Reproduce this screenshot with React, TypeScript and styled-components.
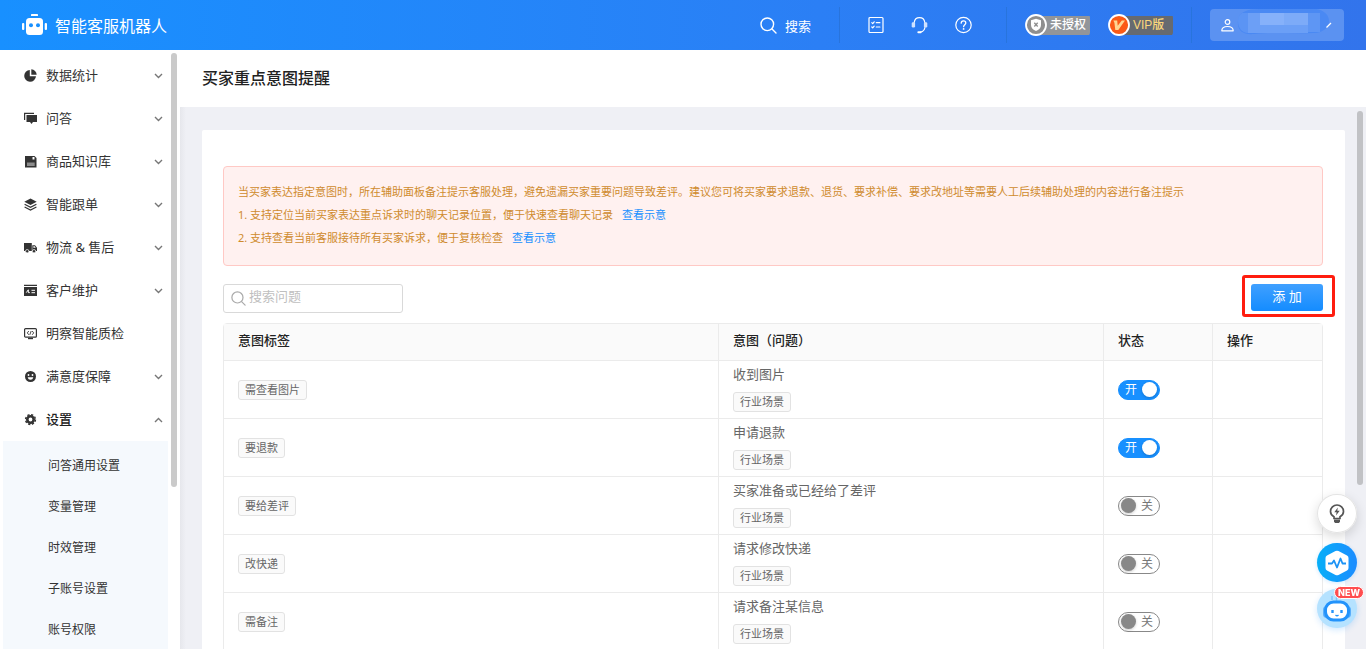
import React, { useState } from 'react';
import styled, { createGlobalStyle } from 'styled-components';

const GlobalStyle = createGlobalStyle`
  * { box-sizing: border-box; }
  html, body { margin: 0; height: 100%; overflow: hidden; }
  body, button, input {
    font-family: "Noto Sans", "Noto Sans CJK SC", sans-serif;
    font-size: 13px;
    color: #333;
  }
  button { border: 0; padding: 0; background: none; cursor: pointer; }
  a { text-decoration: none; color: #1890ff; }
  svg { display: block; flex: none; }
`;

const Page = styled.div`
  display: flex;
  flex-direction: column;
  height: 100vh;
  background: #eff0f5;
`;

/* ---------- header ---------- */
const Header = styled.header`
  display: flex;
  align-items: center;
  flex: none;
  height: 50px;
  padding: 0 22px;
  background: linear-gradient(90deg, #1890ff 0%, #2b7ff5 60%, #3274ec 100%);
  color: #fff;
`;
const Brand = styled.a`
  display: flex;
  align-items: center;
  gap: 8px;
  margin-right: auto;
  color: #fff;
  font-size: 16px;
`;
const SearchButton = styled.button`
  display: flex;
  align-items: center;
  gap: 8px;
  margin-right: 28px;
  color: #fff;
`;
const Divider = styled.span`
  width: 1px;
  height: 36px;
  background: #2874dd;
`;
const HeaderIcons = styled.div`
  display: flex;
  gap: 27px;
  padding: 0 34px 0 28px;
`;
const IconButton = styled.button`
  color: #fff;
`;
const Badges = styled.div`
  display: flex;
  gap: 18px;
  padding: 0 18px;
`;
const Badge = styled.div<{ $bg: string; $color: string }>`
  display: flex;
  align-items: center;
  width: 65px;
  height: 22px;
  gap: 3px;
  color: ${(p) => p.$color};
  font-family: "Liberation Sans", "Noto Sans CJK SC", sans-serif;
  font-size: 12px;
  font-weight: 500;
  line-height: 18px;
  white-space: nowrap;
  background: linear-gradient(${(p) => p.$bg}, ${(p) => p.$bg}) right center / 54px 19px no-repeat;
  border-radius: 4px;
`;
const UserButton = styled.button`
  display: flex;
  align-items: center;
  width: 134px;
  height: 32px;
  margin-left: 18px;
  padding-left: 11px;
  border-radius: 4px;
  background: #5b92f1;
  color: #fff;
`;

/* ---------- sidebar ---------- */
const Body = styled.div`
  display: flex;
  flex: 1;
  min-height: 0;
`;
const Sidebar = styled.aside`
  position: relative;
  z-index: 1;
  flex: none;
  width: 180px;
  padding: 4px 12px 0 3px;
  overflow: hidden;
  background: #fff;
`;
const SideEdge = styled.div`
  flex: none;
  width: 6px;
  margin-right: -6px;
  background: linear-gradient(90deg, #e6e7ec, #eff0f5);
`;
const MenuItem = styled.button<{ $active?: boolean }>`
  display: flex;
  align-items: center;
  gap: 9px;
  width: 100%;
  height: 43px;
  padding: 0 5px 0 21px;
  color: ${(p) => (p.$active ? '#222' : '#333')};
  font-weight: ${(p) => (p.$active ? 500 : 400)};
  text-align: left;
`;
const MenuLabel = styled.span`
  flex: 1;
  padding-bottom: 2px;
  line-height: 20px;
`;
const SubMenu = styled.nav`
  display: flex;
  flex-direction: column;
  padding: 5px 0;
  background: #f5f9fd;
`;
const SubItem = styled.a`
  height: 41px;
  padding-left: 45px;
  color: #333;
  font-size: 12px;
  line-height: 40px;
`;
const Thumb = styled.span<{ $top: number; $right: number; $height: string; $color: string }>`
  position: absolute;
  top: ${(p) => p.$top}px;
  right: ${(p) => p.$right}px;
  width: 6px;
  height: ${(p) => p.$height};
  border-radius: 3px;
  background: ${(p) => p.$color};
`;

/* ---------- main ---------- */
const Main = styled.main`
  display: flex;
  flex: 1;
  flex-direction: column;
  min-width: 0;
`;
const TitleBar = styled.div`
  flex: none;
  height: 57px;
  padding: 0 22px;
  background: #fff;
`;
const Title = styled.h1`
  margin: 0;
  font-size: 16px;
  font-weight: 500;
  line-height: 56px;
  color: #222;
`;
const Scroller = styled.div`
  position: relative;
  flex: 1;
  min-height: 0;
  padding: 23px 21px 0 22px;
  overflow: hidden;
`;
const Card = styled.section`
  padding: 36px 22px 24px 21px;
  border-radius: 2px 2px 0 0;
  background: #fff;
`;
const Notice = styled.div`
  padding: 13px 14px 16px;
  border: 1px solid #ffc9c5;
  border-radius: 4px;
  background: #fff1f0;
  color: #cf8b2d;
  font-size: 11px;
  line-height: 23px;
`;
const NoticeLine = styled.p`
  margin: 0;
  a { margin-left: 9px; }
`;
const Toolbar = styled.div`
  display: flex;
  align-items: center;
  justify-content: space-between;
  height: 57px;
  padding: 9px 0 1px;
`;
const SearchBox = styled.label`
  display: flex;
  align-items: center;
  gap: 3px;
  width: 180px;
  height: 29px;
  padding: 0 7px;
  border: 1px solid #d9d9d9;
  border-radius: 3px;
  color: #aaa;
`;
const SearchInput = styled.input`
  flex: 1;
  min-width: 0;
  height: 26px;
  padding: 0 0 5px;
  border: 0;
  outline: 0;
  background: none;
  &::placeholder { color: #bfbfbf; opacity: 1; }
`;
const Highlight = styled.div`
  align-self: flex-start;
  margin-right: -12px;
  padding: 6px 9px 3px 6px;
  border: 3px solid #ff1d0f;
  border-radius: 3px;
`;
const AddButton = styled.button`
  display: block;
  width: 72px;
  height: 27px;
  padding-bottom: 4px;
  border-radius: 3px;
  background: linear-gradient(#40a0ff, #148cff);
  color: #fff;
  line-height: 22px;
  white-space: pre;
`;
const Table = styled.table`
  width: 100%;
  table-layout: fixed;
  border-collapse: separate;
  border-spacing: 0;
  border: 1px solid #ebebeb;
  border-radius: 4px 4px 0 0;
  color: #666;
  th, td {
    padding: 0 14px;
    border-bottom: 1px solid #ebebeb;
    text-align: left;
  }
  th + th, td + td { border-left: 1px solid #ebebeb; }
  th {
    height: 37px;
    padding-bottom: 5px;
    background: #fafafa;
    color: #222;
    font-weight: 500;
  }
  td { height: 58px; }
`;
const Col = styled.col<{ $w: string }>`
  width: ${(p) => p.$w};
`;
const Stack = styled.div`
  display: flex;
  flex-direction: column;
  align-items: flex-start;
  gap: 8px;
  line-height: 19px;
  padding-bottom: 2px;
`;
const Tag = styled.span`
  display: block;
  width: fit-content;
  height: 20px;
  padding: 0 6px;
  border: 1px solid #e2e2e2;
  border-radius: 3px;
  background: #fafafa;
  font-size: 11px;
  line-height: 18px;
`;
const SwitchTrack = styled.label<{ $on: boolean }>`
  display: flex;
  flex-direction: ${(p) => (p.$on ? 'row' : 'row-reverse')};
  align-items: center;
  justify-content: space-between;
  width: 42px;
  height: 20px;
  padding: ${(p) => (p.$on ? '0 2px 0 6px' : '0 6px 0 2px')};
  border: 1px solid ${(p) => (p.$on ? '#1890ff' : '#888')};
  border-radius: 10px;
  background: ${(p) => (p.$on ? '#1890ff' : '#fff')};
  color: ${(p) => (p.$on ? '#fff' : '#777')};
  font-size: 12px;
  line-height: 16px;
`;
const SwitchKnob = styled.input`
  appearance: none;
  width: 15px;
  height: 15px;
  margin: 0;
  border-radius: 50%;
  background: #888;
  box-shadow: 0 1px 3px rgba(0, 0, 0, 0.2);
  &:checked { background: #fff; }
`;

/* ---------- floating helpers ---------- */
const Floats = styled.div`
  position: fixed;
  right: 9px;
  bottom: 21px;
  z-index: 2;
  display: flex;
  flex-direction: column;
  gap: 7px;
`;
const FloatButton = styled.button<{ $bg: string; $shadow: string }>`
  position: relative;
  display: flex;
  align-items: center;
  justify-content: center;
  width: 40px;
  height: 39px;
  border-radius: 20px;
  background: ${(p) => p.$bg};
  box-shadow: ${(p) => p.$shadow};
  color: #555;
  &:first-child { margin-bottom: 3px; }
`;
const NewMark = styled.span`
  position: absolute;
  top: -3px;
  right: -7px;
  padding: 0 3px;
  border: 1px solid #fff;
  border-radius: 7px;
  background: #ff4d4f;
  color: #fff;
  font: 800 9px/11px Inter, sans-serif;
`;

/* ---------- icons ---------- */
const Svg = ({ w = 13, h = w, vb, children }: { w?: number; h?: number; vb?: string; children: React.ReactNode }) => (
  <svg width={w} height={h} viewBox={vb ?? `0 0 ${w} ${h}`} fill="none" stroke="none" aria-hidden="true">{children}</svg>
);

const RobotLogo = () => (
  <Svg w={25} h={22}>
    <g fill="#fff">
      <rect x="9" y="0" width="7" height="2" rx="0.6" />
      <rect x="4" y="4" width="17" height="17" rx="3.5" />
      <rect x="0" y="9" width="2.3" height="7" rx="1" />
      <rect x="22.7" y="9" width="2.3" height="7" rx="1" />
    </g>
    <circle cx="9" cy="11.3" r="2" fill="#1890ff" />
    <circle cx="16" cy="11.3" r="2" fill="#1890ff" />
  </Svg>
);
const Magnifier = ({ size = 17 }: { size?: number }) => (
  <Svg w={size} vb="0 0 17 17">
    <g stroke="currentColor" strokeWidth="1.4" strokeLinecap="round">
      <circle cx="7.3" cy="7.3" r="6.3" />
      <path d="M12 12l4 4" />
    </g>
  </Svg>
);
const ChecklistIcon = () => (
  <Svg w={16} h={18}>
    <g stroke="currentColor" strokeWidth="1.2" strokeLinecap="round" strokeLinejoin="round">
      <rect x="1" y="1.5" width="14" height="15" rx="1" />
      <path d="M3.8 6.7l.9.9 1.5-1.8M8.3 6.7h3.6M3.8 11l.9.9 1.5-1.8M8.3 11h3.6" />
    </g>
  </Svg>
);
const HeadsetIcon = () => (
  <Svg w={17} h={18}>
    <g stroke="currentColor" strokeWidth="1.2" strokeLinecap="round">
      <path d="M3.2 6.5C3.6 3.6 5.700 1.700 8.500 1.700s4.900 1.900 5.300 4.800" />
      <path d="M13.900 11.500c-.4 2.600-1.700 4-4.200 4.500" />
      <path d="M7.300 16.200h2.400" strokeWidth="1.900" />
    </g>
    <rect x="0.700" y="6.200" width="3.400" height="5.400" rx="1.300" fill="#cfe2ff" />
    <rect x="12.900" y="6.200" width="3.400" height="5.400" rx="1.300" fill="#cfe2ff" />
  </Svg>
);
const HelpIcon = () => (
  <Svg w={17} h={18}>
    <circle cx="8.500" cy="9" r="7.700" stroke="currentColor" strokeWidth="1.200" />
    <path d="M6.200 7.200c0-1.400 1-2.300 2.300-2.300s2.300.9 2.300 2.100c0 1.600-2.200 1.800-2.200 3.700" stroke="currentColor" strokeWidth="1.300" strokeLinecap="round" />
    <circle cx="8.600" cy="12.900" r="0.900" fill="currentColor" />
  </Svg>
);
const ShieldBadge = () => (
  <Svg w={22}>
    <circle cx="11" cy="11" r="10" fill="#8f8f8f" stroke="#fff" strokeWidth="1.800" />
    <path d="M11 4.800l5 1.500v4.700c0 3-2.200 5-5 6-2.800-1-5-3-5-6V6.300z" fill="#fff" />
    <path d="M9.300 8.800l3.400 3.700M12.700 8.800l-3.400 3.700" stroke="#8f8f8f" strokeWidth="1.300" />
  </Svg>
);
const VipBadge = () => (
  <Svg w={22}>
    <circle cx="11" cy="11" r="10" fill="#fb5a16" stroke="#fff" strokeWidth="1.800" />
    <path d="M5.300 6.500h3.900l.5 5.200 4.100-5.200H17L10.300 16H7.300l-.9-7.200z" fill="#ffd591" />
  </Svg>
);
const UserIcon = () => (
  <Svg w={13} h={13}>
    <g stroke="currentColor" strokeWidth="1.200" strokeLinejoin="round">
      <circle cx="6.500" cy="3" r="2.300" />
      <path d="M0.800 11.800c0-2.700 2-4.300 5.700-4.300s5.700 1.600 5.700 4.300z" />
    </g>
  </Svg>
);
const MaskedName = () => (
  <Svg w={104} h={32}>
    <path d="M4 12C5 3 12 0 26 0h56c8 1 13 6 13 12s-6 12-15 12c-20 1-42-1-60 1C9 26 3 22 4 12z" fill="#4a89f3" />
    <path d="M4 12C4 9 5 6 8 4h6v20C8 24 4 19 4 12z" fill="#5b94f4" />
    <rect x="14" y="4" width="12" height="20" fill="#6c9ff6" />
    <rect x="26" y="4" width="24" height="12" fill="#86b1fa" />
    <rect x="50" y="4" width="24" height="12" fill="#7dabf8" />
    <rect x="74" y="4" width="12" height="19" fill="#5e96f4" />
    <rect x="26" y="16" width="48" height="8" fill="#6b9ff6" />
    <path d="M92.500 18.500l4.500-4.500" stroke="#fff" strokeWidth="1.200" />
  </Svg>
);
const Chevron = ({ up }: { up?: boolean }) => (
  <Svg w={9} h={6}>
    <path d={up ? 'M1 5l3.500-3.500L8 5' : 'M1 1l3.500 3.500L8 1'} stroke="#777" strokeWidth="1.400" />
  </Svg>
);

const menuIcons: Record<string, React.ReactNode> = {
  pie: <><path d="M5.800 1A5.900 5.900 0 1 0 12 7.300H5.800z" fill="#333" /><path d="M7.300 0.300A5.700 5.700 0 0 1 12.700 5.800H7.300z" fill="#333" /></>,
  chat: <><path d="M0.600 8V1.300H10" stroke="#333" strokeWidth="1.200" /><path d="M2.500 3H13v7H9l-1.500 2L6 10H2.500z" fill="#333" /></>,
  goods: <><path d="M1 1h9.500l2 2v9.500H1z" fill="#333" /><path d="M3 7.500h7.700V11H3z" fill="#8c8c8c" /><path d="M8.500 2h2v2.500h-2z" fill="#fff" /></>,
  layers: <><path d="M6.500 0.500L12.700 3.700 6.500 7 .3 3.700z" fill="#333" /><path d="M.6 6.300l5.900 3 5.900-3M.6 9l5.900 3 5.900-3" stroke="#333" strokeWidth="1.200" /></>,
  truck: <><path d="M0 2h7.800v8H0zM8.300 4.300h2.700L13 6.700V10H8.300z" fill="#333" /><circle cx="3.200" cy="10.200" r="1.700" fill="#333" stroke="#fff" strokeWidth=".7" /><circle cx="10" cy="10.200" r="1.700" fill="#333" stroke="#fff" strokeWidth=".7" /><path d="M9.400 5.300h1.300l1 1.400H9.400z" fill="#fff" /></>,
  card: <><path d="M0 .8h13v1.300H0zM0 2.900h13v9H0z" fill="#333" /><path d="M2.300 8.600l2-2.800v2.800h1.500M7.500 6.300H11M7.500 8.700H11" stroke="#fff" strokeWidth="1" /></>,
  monitor: <><rect x=".6" y="1.600" width="11.800" height="8.600" rx="1" stroke="#333" strokeWidth="1.200" /><path d="M4 11.500h5" stroke="#333" strokeWidth="1.400" /><path d="M4.800 4L3.300 5.900l1.500 1.900M8.200 4l1.500 1.900-1.500 1.900M7.200 4L5.800 7.800" stroke="#333" strokeWidth=".9" /></>,
  smile: <><circle cx="6.500" cy="6.500" r="5.500" fill="#333" /><circle cx="4.500" cy="5" r=".9" fill="#fff" /><circle cx="8.500" cy="5" r=".9" fill="#fff" /><path d="M3.700 7.300h5.600c-.3 1.700-1.400 2.500-2.800 2.500s-2.500-.8-2.800-2.500z" fill="#fff" /></>,
  gear: <><circle cx="6.500" cy="6.500" r="3.200" stroke="#333" strokeWidth="2.600" /><circle cx="6.500" cy="6.500" r="4.900" stroke="#333" strokeWidth="1.500" strokeDasharray="2.200 1.650" /></>,
};

const menu: { icon: string; label: string; arrow?: 'up' | 'down' }[] = [
  { icon: 'pie', label: '数据统计', arrow: 'down' },
  { icon: 'chat', label: '问答', arrow: 'down' },
  { icon: 'goods', label: '商品知识库', arrow: 'down' },
  { icon: 'layers', label: '智能跟单', arrow: 'down' },
  { icon: 'truck', label: '物流 & 售后', arrow: 'down' },
  { icon: 'card', label: '客户维护', arrow: 'down' },
  { icon: 'monitor', label: '明察智能质检' },
  { icon: 'smile', label: '满意度保障', arrow: 'down' },
  { icon: 'gear', label: '设置', arrow: 'up' },
];
const subMenu = ['问答通用设置', '变量管理', '时效管理', '子账号设置', '账号权限'];

const intents = [
  { tag: '需查看图片', question: '收到图片', on: true },
  { tag: '要退款', question: '申请退款', on: true },
  { tag: '要给差评', question: '买家准备或已经给了差评', on: false },
  { tag: '改快递', question: '请求修改快递', on: false },
  { tag: '需备注', question: '请求备注某信息', on: false },
];

function Switch({ initial, name }: { initial: boolean; name: string }) {
  const [on, setOn] = useState(initial);
  return (
    <SwitchTrack $on={on}>
      <span>{on ? '开' : '关'}</span>
      <SwitchKnob type="checkbox" role="switch" aria-label={name} checked={on} onChange={() => setOn(!on)} />
    </SwitchTrack>
  );
}

export default function App() {
  return (
    <Page lang="zh-CN">
      <GlobalStyle />
      <Header>
        <Brand href="#"><RobotLogo />智能客服机器人</Brand>
        <SearchButton><Magnifier />搜索</SearchButton>
        <Divider />
        <HeaderIcons>
          <IconButton aria-label="任务"><ChecklistIcon /></IconButton>
          <IconButton aria-label="客服"><HeadsetIcon /></IconButton>
          <IconButton aria-label="帮助"><HelpIcon /></IconButton>
        </HeaderIcons>
        <Divider />
        <Badges>
          <Badge $bg="#929599" $color="#fff"><ShieldBadge />未授权</Badge>
          <Badge $bg="#666a70" $color="#fbd77c"><VipBadge />VIP版</Badge>
        </Badges>
        <Divider />
        <UserButton aria-label="账号"><UserIcon /><MaskedName /></UserButton>
      </Header>

      <Body>
        <Sidebar>
          {menu.map((m) => (
            <MenuItem key={m.label} $active={m.arrow === 'up'}>
              <Svg>{menuIcons[m.icon]}</Svg>
              <MenuLabel>{m.label}</MenuLabel>
              {m.arrow && <Chevron up={m.arrow === 'up'} />}
            </MenuItem>
          ))}
          <SubMenu>
            {subMenu.map((s) => <SubItem key={s} href="#">{s}</SubItem>)}
          </SubMenu>
          <Thumb $top={3} $right={3} $height="72.5%" $color="#cacaca" />
        </Sidebar>
        <SideEdge />

        <Main>
          <TitleBar><Title>买家重点意图提醒</Title></TitleBar>
          <Scroller>
            <Card>
              <Notice>
                <NoticeLine>当买家表达指定意图时，所在辅助面板备注提示客服处理，避免遗漏买家重要问题导致差评。建议您可将买家要求退款、退货、要求补偿、要求改地址等需要人工后续辅助处理的内容进行备注提示</NoticeLine>
                <NoticeLine>1. 支持定位当前买家表达重点诉求时的聊天记录位置，便于快速查看聊天记录<a href="#">查看示意</a></NoticeLine>
                <NoticeLine>2. 支持查看当前客服接待所有买家诉求，便于复核检查<a href="#">查看示意</a></NoticeLine>
              </Notice>
              <Toolbar>
                <SearchBox>
                  <Magnifier size={15} />
                  <SearchInput type="text" placeholder="搜索问题" aria-label="搜索问题" />
                </SearchBox>
                <Highlight><AddButton>添 加</AddButton></Highlight>
              </Toolbar>
              <Table>
                <colgroup><Col $w="45%" /><Col $w="auto" /><Col $w="109px" /><Col $w="110px" /></colgroup>
                <thead>
                  <tr><th>意图标签</th><th>意图（问题）</th><th>状态</th><th>操作</th></tr>
                </thead>
                <tbody>
                  {intents.map((row) => (
                    <tr key={row.tag}>
                      <td><Tag>{row.tag}</Tag></td>
                      <td><Stack><span>{row.question}</span><Tag>行业场景</Tag></Stack></td>
                      <td><Switch initial={row.on} name={row.tag} /></td>
                      <td />
                    </tr>
                  ))}
                </tbody>
              </Table>
            </Card>
            <Thumb $top={4} $right={3} $height="69%" $color="#c1c2c5" />
          </Scroller>
        </Main>
      </Body>

      <Floats>
        <FloatButton aria-label="提示" $bg="#fff" $shadow="0 0 0 1px #e4e4e4 inset, 0 4px 12px rgba(0,0,0,0.15)">
          <Svg w={16} h={20}>
            <path d="M5 14.500v-1.700C2.800 11.600 1.500 9.700 1.500 7.500a6.500 6.500 0 0 1 13 0c0 2.200-1.300 4.100-3.500 5.300v1.700z" stroke="currentColor" strokeWidth="1.700" />
            <path d="M5 15.500h6v2l-1 1.500H6l-1-1.500z" fill="currentColor" />
            <path d="M8.800 3.500L5.300 8.200h2.300l-.6 3.300 3.700-4.800H8.300z" fill="currentColor" />
          </Svg>
        </FloatButton>
        <FloatButton aria-label="诊断" $bg="linear-gradient(90deg, #06aff8, #1c8cff)" $shadow="0 1px 4px rgba(24,144,255,0.2)">
          <Svg w={26} h={26}>
            <path d="M11.500 1.100q1.500-.8 3 0l8.500 4.400q1.500.8 1.500 2.500v10q0 1.700-1.500 2.500l-8.500 4.400q-1.500.8-3 0L3 20.500Q1.500 19.700 1.500 18V8Q1.500 6.300 3 5.500z" fill="#fff" />
            <path d="M4 13.500h4l2-3 3 7 3.500-9 2 5H22" stroke="#1c93f5" strokeWidth="1.800" strokeLinejoin="round" />
          </Svg>
        </FloatButton>
        <FloatButton aria-label="智能助手" $bg="#b5e2ff" $shadow="0 2px 6px rgba(24,144,255,0.2)">
          <Svg w={40} h={39}>
            <path d="M15 7v4M19.500 8v4" stroke="#7cc4fb" strokeWidth="1.500" />
            <rect x="6" y="17" width="28" height="12" rx="4" fill="#58aefb" />
            <rect x="8.500" y="13" width="23" height="18" rx="8" fill="#fff" stroke="#2393fb" strokeWidth="3" />
            <path d="M15.500 21v3M24.500 21v3" stroke="#2393fb" strokeWidth="2.400" />
            <path d="M18.500 26q1.500 1.500 3 0" stroke="#2393fb" strokeWidth="1.300" />
          </Svg>
          <NewMark>NEW</NewMark>
        </FloatButton>
      </Floats>
    </Page>
  );
}
